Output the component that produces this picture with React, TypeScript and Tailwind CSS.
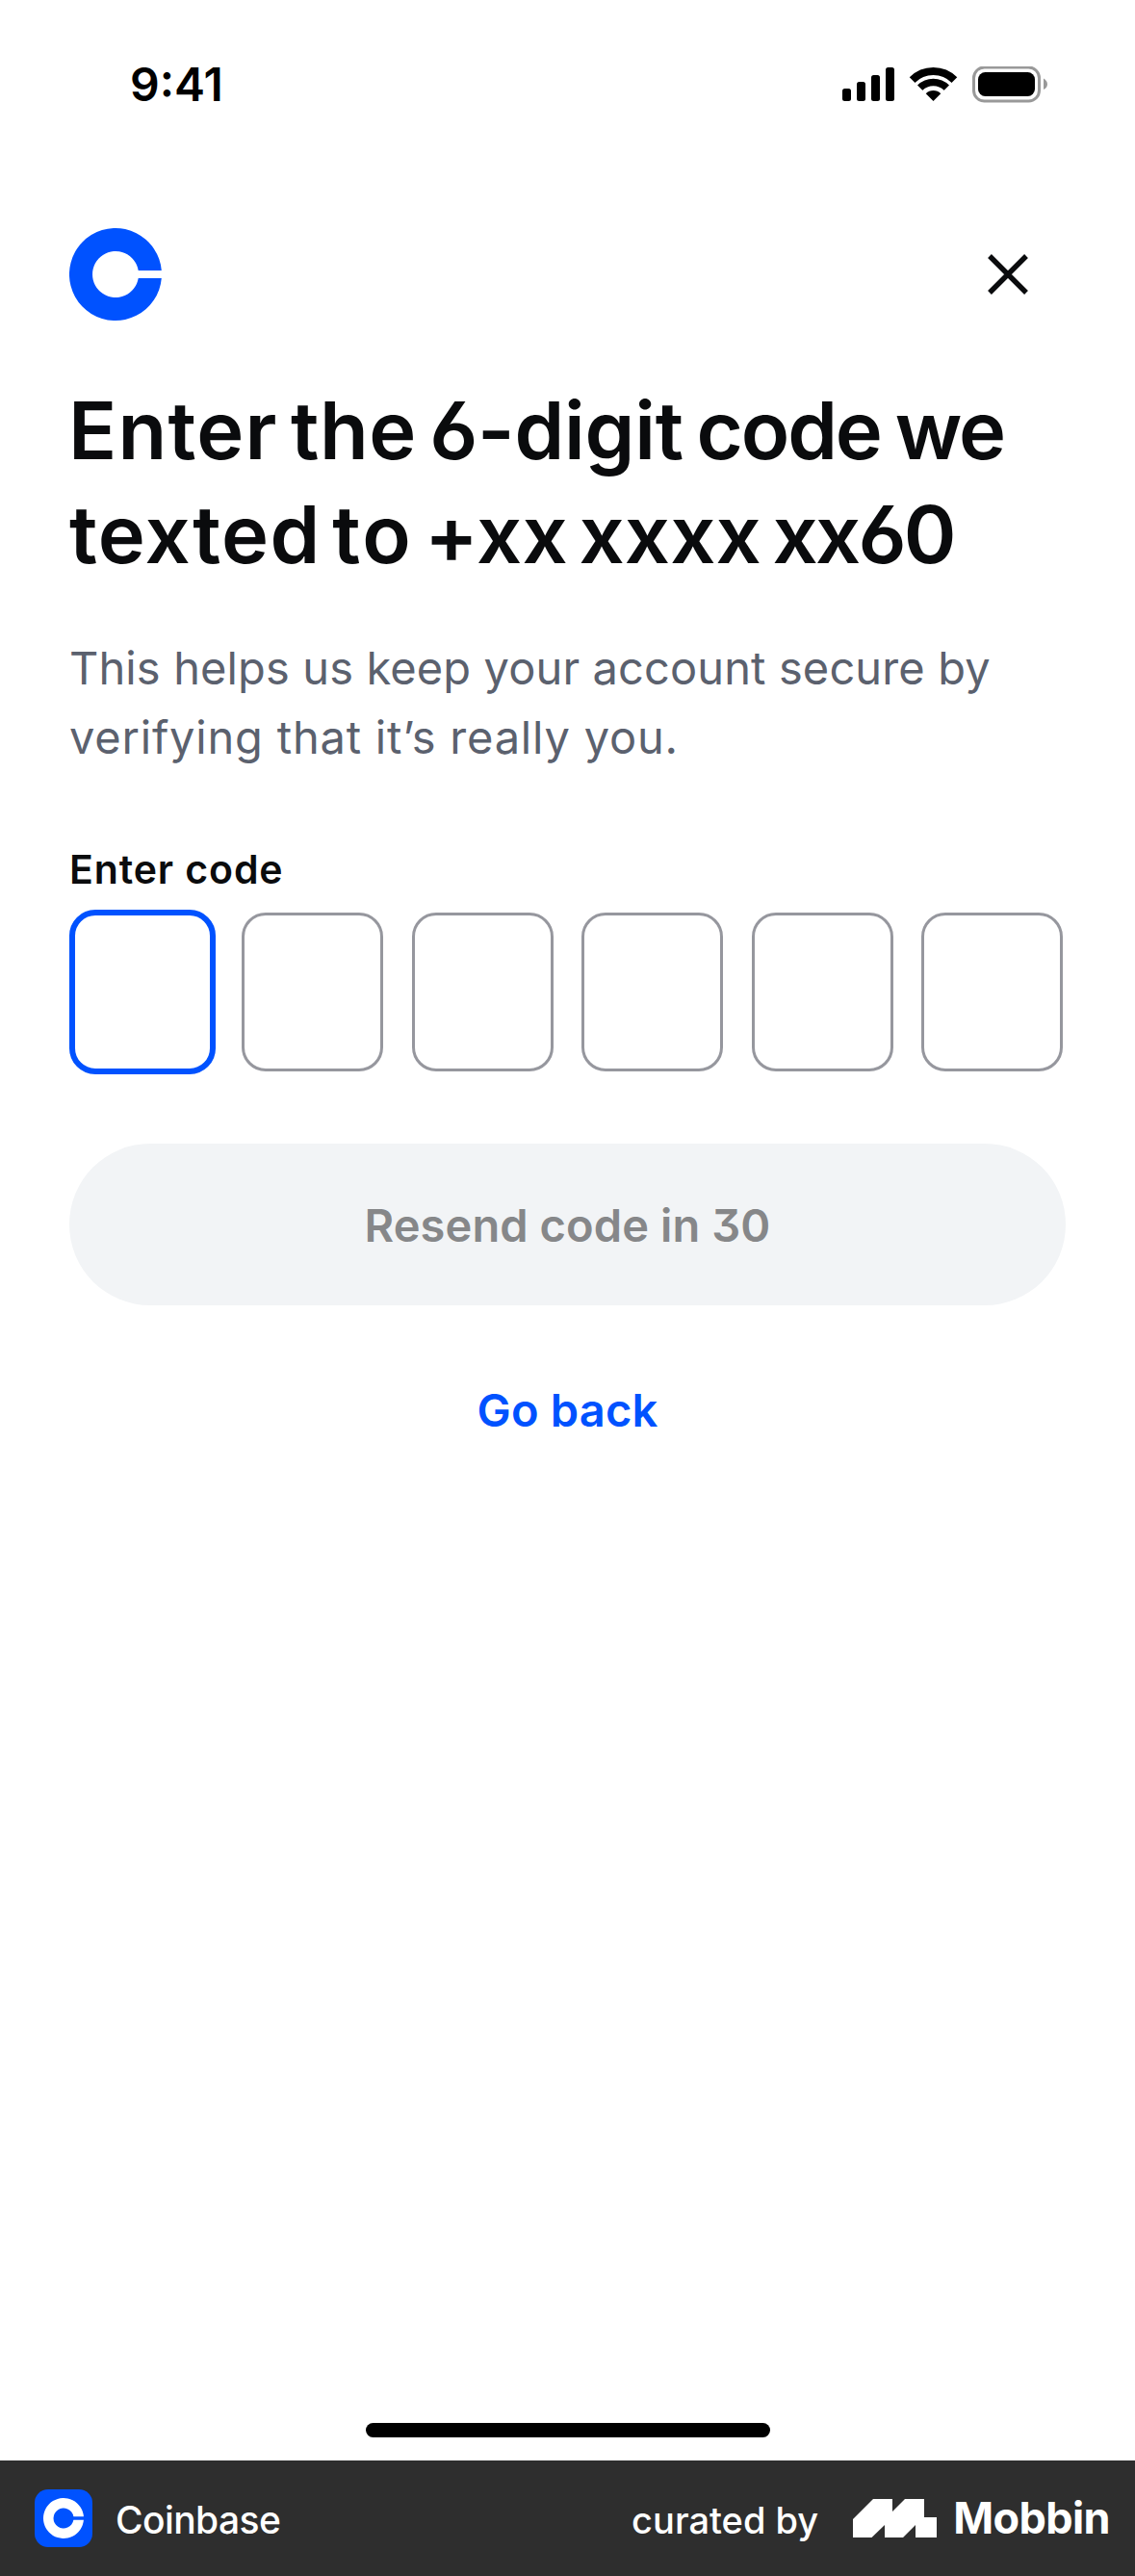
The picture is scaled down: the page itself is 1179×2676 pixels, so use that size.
function StatusIcons() {
  return (
    <svg className="h-[38px] w-[214px]" viewBox="875 69 214 38" aria-hidden="true">
      <rect x="875" y="92" width="9" height="13" rx="2.5" />
      <rect x="890" y="85" width="9" height="20" rx="2.5" />
      <rect x="905" y="78" width="9" height="27" rx="2.5" />
      <rect x="920" y="70" width="9" height="35" rx="2.5" />
      <clipPath id="fan">
        <path d="M969.5 105 L940 75.500 V60 H999 V75.500 Z" />
      </clipPath>
      <g clipPath="url(#fan)">
        <circle cx="969.5" cy="105" r="31" fill="none" stroke="black" strokeWidth="8" />
        <circle cx="969.5" cy="105" r="19.5" fill="none" stroke="black" strokeWidth="7.5" />
        <circle cx="969.5" cy="105" r="11" />
      </g>
      <rect x="1011.5" y="70" width="68" height="35" rx="11" fill="none" stroke="#999" strokeWidth="3" />
      <rect x="1016" y="75" width="59" height="25" rx="7.5" />
      <path d="M1084 81.5 C1089.300 84.500 1089.300 90.500 1084 93 Z" fill="#999" />
    </svg>
  );
}

function CoinbaseMark({ className }: { className: string }) {
  return (
    <svg className={className} viewBox="0 0 96 96" aria-hidden="true">
      <path
        fill="currentColor"
        d="M95.800 44 H71.700 A24 24 0 1 0 71.700 52 H95.800 A48 48 0 1 1 95.800 44 Z"
      />
    </svg>
  );
}

function MobbinMark() {
  return (
    <svg className="h-10 w-[87px]" viewBox="0 0 87 40" fill="white" aria-hidden="true">
      <path d="M0 21 L21 0 H41 V13 L54 0 H74 V19 H87 V40 H65 V27 L52 40 H33 V27 L19.500 40 H0 Z" />
    </svg>
  );
}

export default function App() {
  return (
    <div className="flex h-[2676px] w-[1179px] flex-col bg-white font-['Inter',sans-serif] text-[#0a0b0d]">
      <header className="flex h-[174px] items-start justify-between pr-[90px] pl-[135px] text-black">
        <span className="pt-[58px] text-[48px] leading-[60px] font-semibold">9:41</span>
        <div className="pt-[69px]">
          <StatusIcons />
        </div>
      </header>

      <main className="flex flex-1 flex-col px-[72px] pt-[63px]">
        <div className="flex h-24 items-center justify-between pr-[39px]">
          <CoinbaseMark className="size-24 text-[#0052ff]" />
          <button aria-label="Close" className="p-0">
            <svg className="size-[42px]" viewBox="0 0 42 42" stroke="currentColor" strokeWidth="5.400">
              <path d="M2 2 L40 40 M40 2 L2 40" />
            </svg>
          </button>
        </div>

        <h1 className="-ml-px mt-[60px] text-[83px] leading-[108px] font-semibold whitespace-nowrap [font-feature-settings:'ss01']">
          <span className="block tracking-[-0.2px] [word-spacing:-7.2px]">
            <span className="tracking-[1.2px]">Enter</span> <span className="tracking-[0.4px]">the</span> 6-digit{" "}
            <span className="tracking-[-2.1px] [word-spacing:-4px]">code we</span>
          </span>
          <span className="ml-px block tracking-[0.1px] [word-spacing:-9.2px]">
            <span className="tracking-[1.3px]">texted</span> <span className="tracking-[2.4px]">to</span> +xx xxxx{" "}
            <span className="tracking-[-2.8px]">xx60</span>
          </span>
        </h1>

        <p className="mt-[49px] text-[47px] leading-[72px] whitespace-nowrap text-[#5b616e]">
          <span className="block tracking-[0.12px]">This helps us keep your account secure by</span>
          <span className="block tracking-[0.8px]">verifying that it’s really you.</span>
        </p>

        <div className="mt-[77px] text-[41px] leading-[48px] font-semibold tracking-[0.9px]">Enter code</div>

        <div className="mt-[18px] flex h-[171px] items-center justify-between pr-[3px]">
          <div className="h-[171px] w-[152px] rounded-[27px] border-[6px] border-[#0052ff]" />
          <div className="flex w-[853px] justify-between">
            {[1, 2, 3, 4, 5].map((n) => (
              <div key={n} className="h-[165px] w-[147px] rounded-[25px] border-[3px] border-[#96979e]" />
            ))}
          </div>
        </div>

        <button className="mt-[72px] flex h-[168px] items-center justify-center rounded-full bg-[#f2f4f6] pt-[3px] text-[47px] font-semibold tracking-[0.1px] text-[#868789] [font-feature-settings:'cv09']">
          Resend code in 30
        </button>
        <button className="mt-[79px] text-[47px] leading-[60px] font-semibold tracking-[0.2px] text-[#0052ff]">
          Go back
        </button>

        <div className="mt-auto mb-[24px] h-[15px] w-[420px] self-center rounded-full bg-black" />
      </main>

      <footer className="flex h-[120px] items-center bg-[#2e2e2e] pr-[26px] pl-9 text-white">
        <div className="flex size-[60px] items-center justify-center rounded-[14px] bg-[#0052ff]">
          <CoinbaseMark className="size-[42px]" />
        </div>
        <span className="ml-6 pt-1 text-[39px] font-medium tracking-[-0.6px]">Coinbase</span>
        <span className="mr-[36px] ml-auto pt-1 text-[38px] font-medium">curated by</span>
        <MobbinMark />
        <span className="ml-[17px] text-[45px] font-bold tracking-[-0.6px]">Mobbin</span>
      </footer>
    </div>
  );
}
